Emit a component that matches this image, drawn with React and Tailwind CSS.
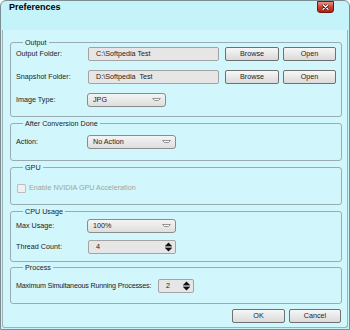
import React from 'react';

// Preferences dialog, Windows 7 basic style

const Button = ({ children, className = '' }) => (
    <div
        className={`h-[14px] flex items-center justify-center rounded-[2px] border border-[#707070] bg-linear-to-b from-[#f7f7f7] to-[#dadada] ${className}`}
    >
        {children}
    </div>
);

const TextBox = ({ value, className = '' }) => (
    <div
        className={`h-[14px] flex items-center pl-[7px] rounded-[2px] border border-[#a3a3a3] bg-[#e6e6e6] whitespace-pre ${className}`}
    >
        {value}
    </div>
);

const Combo = ({ value, className = '' }) => (
    <div
        className={`h-[14px] flex items-center pl-[5px] pr-[4px] rounded-[3px] border border-[#8c8c8c] bg-linear-to-b from-[#f4f4f4] to-[#dedede] ${className}`}
    >
        <span>{value}</span>
        <svg width="9" height="3" viewBox="0 0 9 3" className="ml-auto -mt-[2px]">
            <path d="M0.5 0.5H8.5L6.5 2.5H2.5Z" fill="#fafafa" stroke="#8a8a8a" strokeWidth="0.9" />
        </svg>
    </div>
);

const SpinBox = ({ value, className = '' }) => (
    <div
        className={`h-[14px] flex items-center pl-[7px] pr-[3px] rounded-[2px] border border-[#a3a3a3] bg-[#e6e6e6] ${className}`}
    >
        <span>{value}</span>
        <svg width="7" height="10" viewBox="0 0 7 10" className="ml-auto">
            <path d="M0 4L3.5 0.5L7 4Z" fill="#111" />
            <path d="M0 6L3.5 9.5L7 6Z" fill="#111" />
            <rect x="0" y="4.6" width="7" height="0.8" fill="#111" />
        </svg>
    </div>
);

const Group = ({ title, className = '', children }) => (
    <div className={`relative border border-[#9aabaf] rounded-[3px] pl-[5px] ${className}`}>
        <span className="absolute -top-[5px] left-[12px] px-[2px] leading-[9px] bg-[#d1f6fb] whitespace-nowrap">
            {title}
        </span>
        {children}
    </div>
);

const Row = ({ label, children, labelWidth = 'w-[72px]' }) => (
    <div className="h-[14px] flex items-center">
        <span className={`${labelWidth} shrink-0 whitespace-nowrap`}>{label}</span>
        {children}
    </div>
);

const App = () => {
    return (
        <div className="w-[350px] h-[330px] flex flex-col bg-[#c5f3fa] border border-[#7b8e94] rounded-t-[6px] font-['Liberation_Sans',Arial,sans-serif] text-[7.2px] text-[#1c1c1c] leading-none">
            {/* barre de titre */}
            <div className="h-[29px] flex items-start shrink-0">
                <span className="ml-[8px] mt-[1px] text-[9px] leading-[11px] font-bold text-black">
                    Preferences
                </span>
                <div className="ml-auto mr-[15px] w-[17px] h-[12px] flex items-center justify-center rounded-b-[3px] border border-[#6b1a12] bg-linear-to-b from-[#ec8f82] via-[#d0402e] to-[#b1200f]">
                    <svg width="7" height="6" viewBox="0 0 7 6">
                        <path d="M1 0.8L6 5.2M6 0.8L1 5.2" stroke="#3b0a05" strokeWidth="2.4" strokeLinecap="round" />
                        <path d="M1 0.8L6 5.2M6 0.8L1 5.2" stroke="#ffffff" strokeWidth="1.3" strokeLinecap="round" />
                    </svg>
                </div>
            </div>

            {/* zone client */}
            <div className="flex-1 mx-[1px] mb-[1px] flex flex-col pl-[7px] pr-[5px] pt-[12px] bg-[#d1f6fb] border-x border-b border-[#9cb3b8] rounded-b-[3px]">
                <Group title="Output" className="h-[75px] pt-[4px] flex flex-col gap-[9px]">
                    <Row label="Output Folder:">
                        <TextBox value="C:\Softpedia Test" className="w-[131px]" />
                        <Button className="w-[54px] ml-[6px]">Browse</Button>
                        <Button className="w-[53px] ml-[4px]">Open</Button>
                    </Row>
                    <Row label="Snapshot Folder:">
                        <TextBox value="D:\Softpedia  Test" className="w-[131px]" />
                        <Button className="w-[54px] ml-[6px]">Browse</Button>
                        <Button className="w-[53px] ml-[4px]">Open</Button>
                    </Row>
                    <Row label="Image Type:">
                        <Combo value="JPG" className="w-[79px] -ml-[1px]" />
                    </Row>
                </Group>

                <Group title="After Conversion Done" className="h-[38px] mt-[6px] pt-[11px]">
                    <Row label="Action:">
                        <Combo value="No Action" className="w-[89px] -ml-[1px]" />
                    </Row>
                </Group>

                <Group title="GPU" className="h-[38px] mt-[6px] pt-[13px]">
                    <div className="h-[14px] flex items-center pl-[1px] text-[#a3a3a3]">
                        <span className="w-[9px] h-[9px] rounded-[1px] border border-[#bdbdbd] bg-[#f0f0f0]" />
                        <span className="ml-[3px]">Enable NVIDIA GPU Acceleration</span>
                    </div>
                </Group>

                <Group title="CPU Usage" className="h-[51px] mt-[6px] pt-[7px] flex flex-col gap-[7px]">
                    <Row label="Max Usage:">
                        <Combo value="100%" className="w-[89px] -ml-[1px]" />
                    </Row>
                    <Row label="Thread Count:">
                        <SpinBox value="4" className="w-[88px]" />
                    </Row>
                </Group>

                <Group title="Process" className="h-[37px] mt-[5px] pt-[11px]">
                    <Row
                        label={<span className="tracking-[-0.2px]">Maximum Simultaneous Running Processes:</span>}
                        labelWidth="w-[142px]"
                    >
                        <SpinBox value="2" className="w-[36px]" />
                    </Row>
                </Group>

                <div className="flex justify-end mt-[5px] pr-[1px]">
                    <Button className="w-[53px]">OK</Button>
                    <Button className="w-[52px] ml-[4px]">Cancel</Button>
                </div>
            </div>
        </div>
    );
};

export default App;
